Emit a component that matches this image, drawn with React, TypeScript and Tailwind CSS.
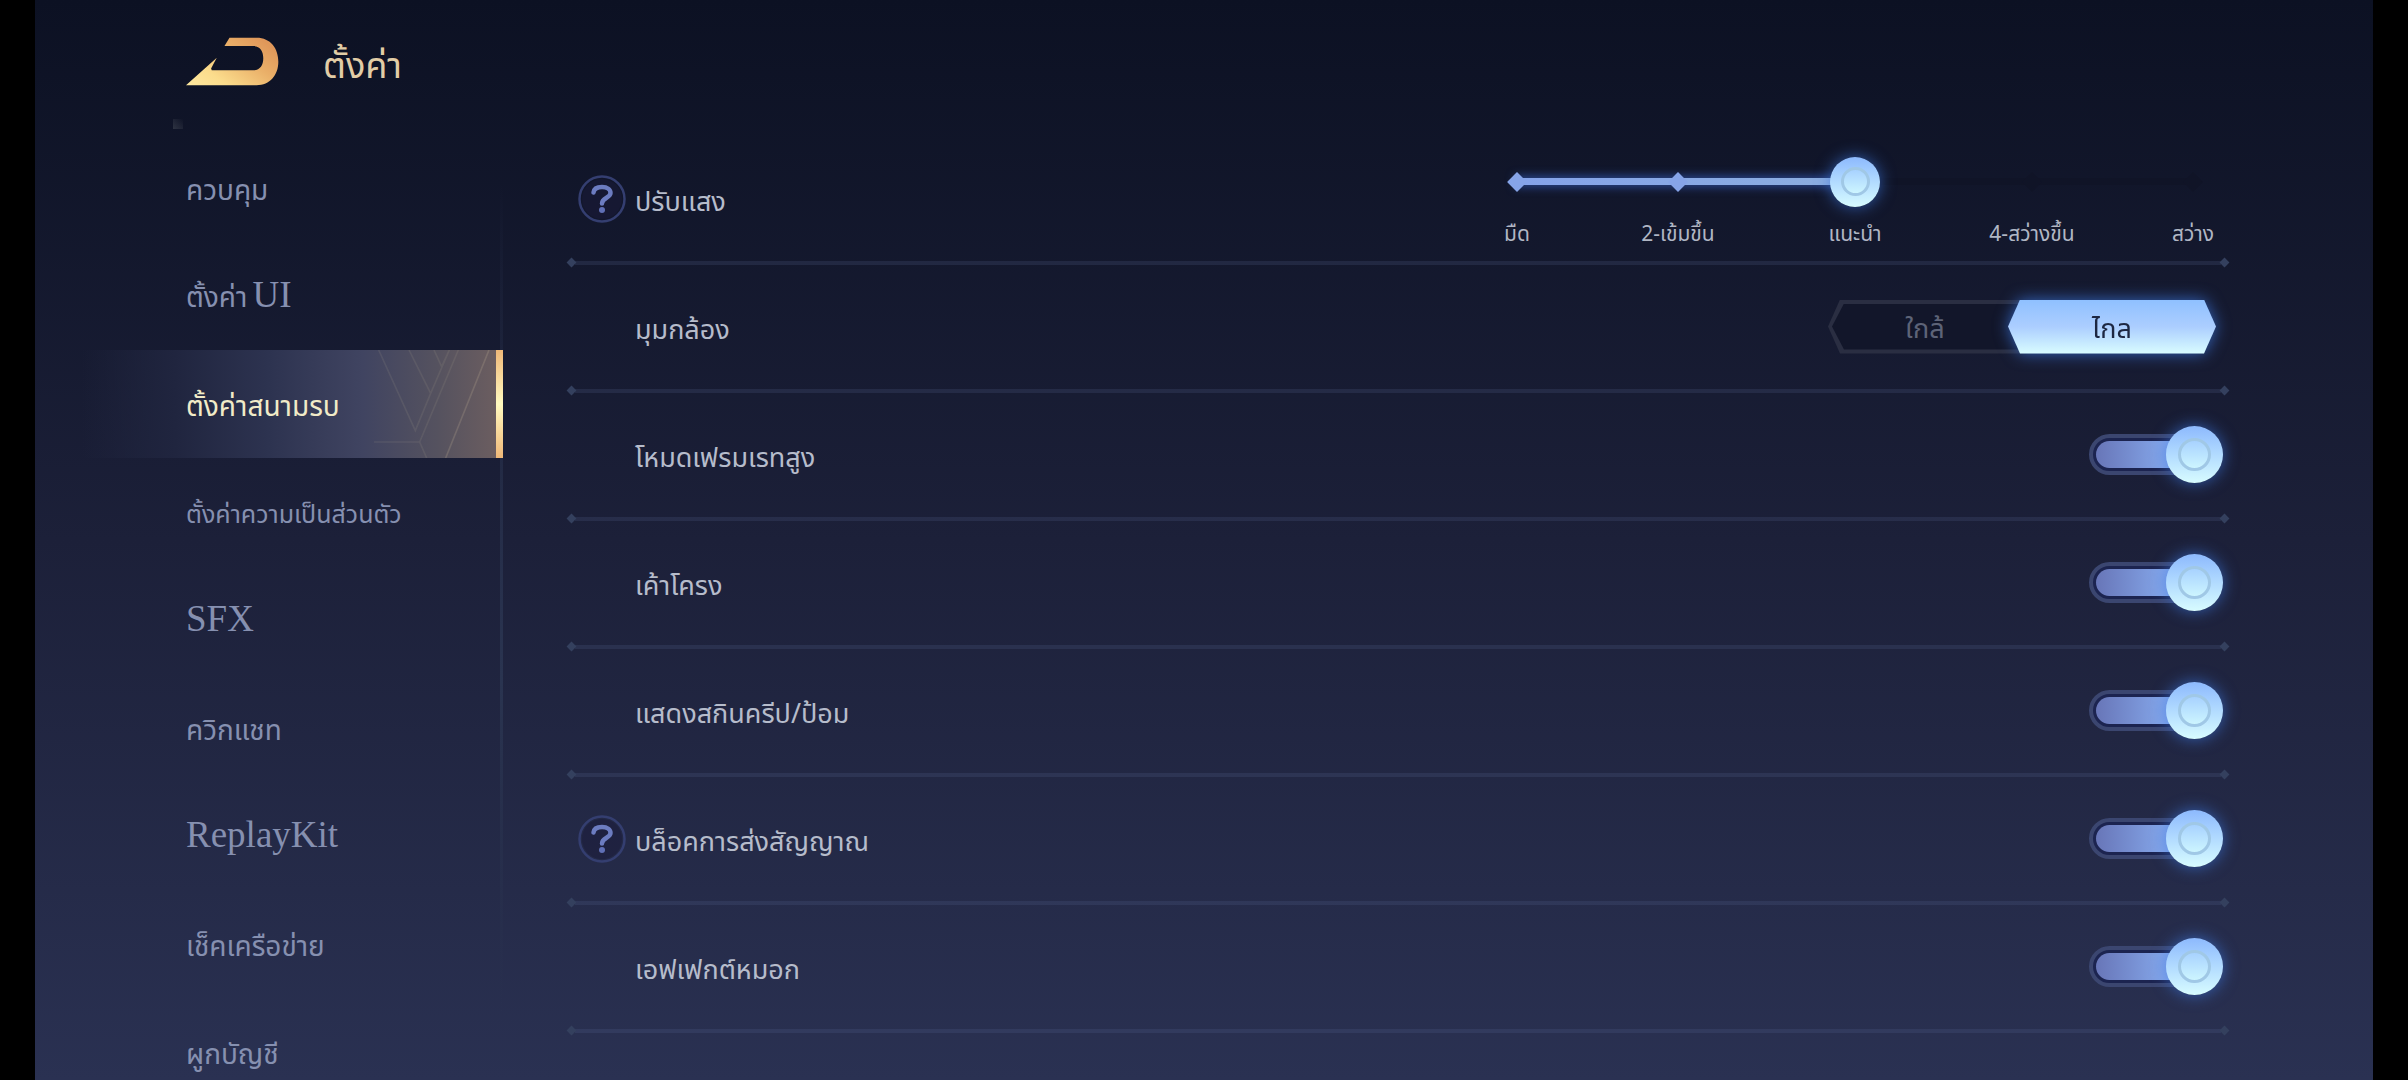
import { useState } from "react";
import type { ReactNode } from "react";

const menu = [
  { label: "ควบคุม" },
  { label: "ตั้งค่า", latin: "UI" },
  { label: "ตั้งค่าสนามรบ" },
  { label: "ตั้งค่าความเป็นส่วนตัว", small: true },
  { latin: "SFX" },
  { label: "ควิกแชท" },
  { latin: "ReplayKit" },
  { label: "เช็คเครือข่าย" },
  { label: "ผูกบัญชี" },
];

const levels = ["มืด", "2-เข้มขึ้น", "แนะนำ", "4-สว่างขึ้น", "สว่าง"];

const switches = [
  { id: "high-frame-rate", label: "โหมดเฟรมเรทสูง" },
  { id: "outline", label: "เค้าโครง" },
  { id: "creep-skins", label: "แสดงสกินครีป/ป้อม" },
  { id: "block-signals", label: "บล็อคการส่งสัญญาณ", help: true },
  { id: "fog-effect", label: "เอฟเฟกต์หมอก" },
];

function BackLogo() {
  return (
    <svg viewBox="557 112 278 146" className="h-[49px] w-[93px]" aria-hidden="true">
      <defs>
        <linearGradient id="gold" x1="0" y1="1" x2="1" y2="0.3">
          <stop offset="0" stopColor="#ffe9a0" />
          <stop offset="0.3" stopColor="#fbdc8c" />
          <stop offset="0.7" stopColor="#eab069" />
          <stop offset="1" stopColor="#e0985a" />
        </linearGradient>
      </defs>
      <path
        fill="url(#gold)"
        d="M557 256 L649 174 L632 206 L634 211 H758 C778 211 788 196 788 175 C788 153 778 139 758 139 H672 L687 114 H768 C810 114 833 146 833 186 C833 226 808 256 768 256 Z"
      />
    </svg>
  );
}

function HelpIcon() {
  return (
    <svg viewBox="0 0 48 48" className="size-12" fill="none" aria-hidden="true">
      <circle cx="24" cy="24" r="20" fill="#1a1a3a" fillOpacity="0.5" />
      <circle cx="24" cy="24" r="22.5" stroke="#343e70" strokeWidth="2.5" />
      <path
        d="M15.5 17.5C16 13.5 19.5 12 24 12C29.5 12 32.5 14.5 32.5 18C32.5 23 24 22.5 24 28.5"
        stroke="#6c7cc0"
        strokeWidth="4.5"
        strokeLinecap="round"
      />
      <circle cx="24" cy="35" r="3" fill="#6070b6" />
    </svg>
  );
}

function Knob() {
  return (
    <span className="flex size-full items-center justify-center rounded-full bg-linear-to-b from-[#8db9fd] to-[#d8fcff] shadow-[0_0_16px_rgba(60,120,225,0.7)]">
      <span className="size-[58%] rounded-full border-3 border-[#a0c8e6] bg-linear-to-b from-[#a8d2ff] to-[#cdf5ff]" />
    </span>
  );
}

function Divider() {
  return (
    <div className="flex h-[9px] items-center" aria-hidden="true">
      <span className="size-[7px] rotate-45 bg-[#34405e]" />
      <span className="h-[4px] flex-1 bg-[#5a6a96]/20" />
      <span className="size-[7px] rotate-45 bg-[#34405e]" />
    </div>
  );
}

type RowProps = { label: string; id: string; group?: boolean; help?: boolean; children: ReactNode };

function Row({ label, id, group, help, children }: RowProps) {
  const text = "flex-1 pt-[10px] text-[27px] text-[#b6bccb]";
  return (
    <li>
      <div className="flex h-[119px] items-center pr-[5px] pl-[10px]">
        <div className="mr-[9px] w-12">
          {help && (
            <button type="button" aria-label={"ข้อมูล " + label} className="block">
              <HelpIcon />
            </button>
          )}
        </div>
        {group ? (
          <span id={id} className={text}>
            {label}
          </span>
        ) : (
          <label htmlFor={id} className={text}>
            {label}
          </label>
        )}
        {children}
      </div>
      <Divider />
    </li>
  );
}

function Switch({ id }: { id: string }) {
  const [on, setOn] = useState(true);
  return (
    <label className="relative flex h-[57px] w-[134px] cursor-pointer items-center">
      <input
        id={id}
        type="checkbox"
        role="switch"
        checked={on}
        onChange={() => setOn(!on)}
        className="peer sr-only"
      />
      <span className="h-[41px] w-full rounded-full border-4 border-[#3b4670] bg-[#1c2450] p-[3px]">
        <span
          className={
            on
              ? "block size-full rounded-full bg-linear-to-r from-[#6876b8] to-[#8bb2f5] to-70%"
              : "block size-full rounded-full bg-[#20264a]"
          }
        />
      </span>
      <span className="absolute left-0 size-[57px] peer-checked:left-[77px]">
        <Knob />
      </span>
    </label>
  );
}

function Brightness() {
  const [level, setLevel] = useState(2);
  return (
    <div className="w-[736px] pt-[10px]">
      <div className="relative flex h-[50px] items-center">
        <div className="mx-[30px] h-[7px] flex-1 rounded-full bg-[#101427]">
          <div
            className="h-full bg-linear-to-r from-[#85a3ea] to-[#8caedf] shadow-[0_0_10px_2px_rgba(56,98,200,0.65)]"
            style={{ width: [0, 24, 50, 76, 100][level] + "%" }}
          />
        </div>
        <div className="absolute inset-0 grid grid-cols-[60px_1fr_92px_1fr_60px] items-center">
          {levels.map((l, i) =>
            i === level ? (
              <span key={l} className="size-[50px] justify-self-center">
                <Knob />
              </span>
            ) : (
              <span
                key={l}
                className={
                  i < level
                    ? "size-[14px] rotate-45 justify-self-center bg-[#86a4e8]"
                    : "size-[14px] rotate-45 justify-self-center bg-[#101427]"
                }
              />
            ),
          )}
        </div>
        <input
          id="brightness"
          type="range"
          min={0}
          max={4}
          value={level}
          onChange={(e) => setLevel(Number(e.target.value))}
          className="absolute inset-0 size-full cursor-pointer opacity-0"
        />
      </div>
      <div className="mt-3 grid grid-cols-[60px_1fr_92px_1fr_60px] text-center text-[21px] leading-8 whitespace-nowrap text-[#b0b6c4]">
        {levels.map((l) => (
          <span key={l}>{l}</span>
        ))}
      </div>
    </div>
  );
}

const hex =
  "[clip-path:polygon(0_50%,12px_0,calc(100%-12px)_0,100%_50%,calc(100%-12px)_100%,12px_100%)]";

function CameraChoice() {
  const [value, setValue] = useState("far");
  const options = [
    { id: "near", label: "ใกล้" },
    { id: "far", label: "ไกล" },
  ];
  return (
    <fieldset aria-labelledby="camera-label" className="relative mr-[7px] h-[54px] w-[388px]">
      <div className={"absolute inset-0 bg-[#2a2e42] p-1 " + hex}>
        <div className={"size-full bg-[#12162a] " + hex} />
      </div>
      <div className="relative flex h-full">
        {options.map((o) => (
          <label
            key={o.id}
            className={
              value === o.id
                ? "w-[208px] cursor-pointer drop-shadow-[0_0_8px_rgba(60,120,225,0.8)]"
                : "w-[180px] cursor-pointer"
            }
          >
            <input
              type="radio"
              name="camera"
              value={o.id}
              checked={value === o.id}
              onChange={() => setValue(o.id)}
              className="sr-only"
            />
            <span
              className={
                value === o.id
                  ? "flex size-full items-center justify-center bg-linear-to-b from-[#8fc0ff] via-[#acceff] to-[#dafdff] pt-2 text-[27px] text-[#1d2742] " +
                    hex
                  : "flex size-full items-center justify-center pt-2 pl-[14px] text-[27px] text-[#5d6377]"
              }
            >
              {o.label}
            </span>
          </label>
        ))}
      </div>
    </fieldset>
  );
}

function ActivePattern() {
  return (
    <svg
      viewBox="1030 330 397 324"
      className="absolute top-0 right-[7px] h-full"
      fill="none"
      stroke="#b5a890"
      strokeOpacity="0.13"
      strokeWidth="5"
      aria-hidden="true"
    >
      <path d="M1074 330L1184 572L1230 460L1286 330M1165 330L1230 460M1240 330L1263 380L1286 330" />
      <path d="M1313 330L1197 606L1218 654M1060 606H1197" />
      <path d="M1405 330L1275 654" strokeOpacity="0.26" />
    </svg>
  );
}

export default function App() {
  const [active, setActive] = useState(2);
  return (
    <div className="h-screen bg-black px-[35px] font-['Noto_Sans_Thai','Noto_Sans',sans-serif]">
      <div className="flex h-full flex-col overflow-hidden bg-linear-to-b from-[#0c1123] via-[#1c2039] to-[#2a3152]">
        <header className="flex h-[134px] shrink-0 items-start gap-[44px] pt-[37px] pl-[151px]">
          <button type="button" aria-label="กลับ">
            <BackLogo />
          </button>
          <h1 className="pt-1 text-[36px] leading-[52px] text-[#e2cda6]">ตั้งค่า</h1>
        </header>
        <div className="flex min-h-0 flex-1">
          <nav className="relative w-[468px] shrink-0">
            <span className="absolute -top-[15px] left-[138px] size-[10px] bg-linear-to-tr from-[#2e3342] to-transparent" />
            <span className="absolute top-[50px] right-0 h-[830px] w-[3px] bg-linear-to-b from-transparent via-[#2a3450] via-60% to-transparent" />
            <ul className="relative">
              {menu.map((item, i) => (
                <li key={i}>
                  <button
                    type="button"
                    onClick={() => setActive(i)}
                    className={
                      (i === active
                        ? "bg-[linear-gradient(90deg,transparent_10%,#20253f_30%,#2d3350_50%,#404461_70%,#55525f_86%,#6e5f60_100%)] text-[#f1ebc8] "
                        : "text-[#8690b0] ") +
                      "relative flex h-[108px] w-full items-center pl-[151px] text-left"
                    }
                  >
                    {i === active && <ActivePattern />}
                    {i === active && (
                      <span className="absolute inset-y-0 right-0 w-[7px] bg-linear-to-b from-[#efb878] via-[#fffabf] to-[#efb878]" />
                    )}
                    <span className="relative flex items-baseline gap-[5px]">
                      {item.label && (
                        <span className={item.small ? "pt-2 text-[25px]" : "pt-2 text-[28px]"}>
                          {item.label}
                        </span>
                      )}
                      {item.latin && (
                        <span className="pb-[2px] font-['Liberation_Serif',serif] text-[37px]">
                          {item.latin}
                        </span>
                      )}
                    </span>
                  </button>
                </li>
              ))}
            </ul>
          </nav>
          <main className="min-w-0 flex-1 pr-[145px] pl-[65px]">
            <ul className="pt-[5px]">
              <Row label="ปรับแสง" id="brightness" help>
                <Brightness />
              </Row>
              <Row label="มุมกล้อง" id="camera-label" group>
                <CameraChoice />
              </Row>
              {switches.map((s) => (
                <Row key={s.id} label={s.label} id={s.id} help={s.help}>
                  <Switch id={s.id} />
                </Row>
              ))}
            </ul>
          </main>
        </div>
      </div>
    </div>
  );
}
